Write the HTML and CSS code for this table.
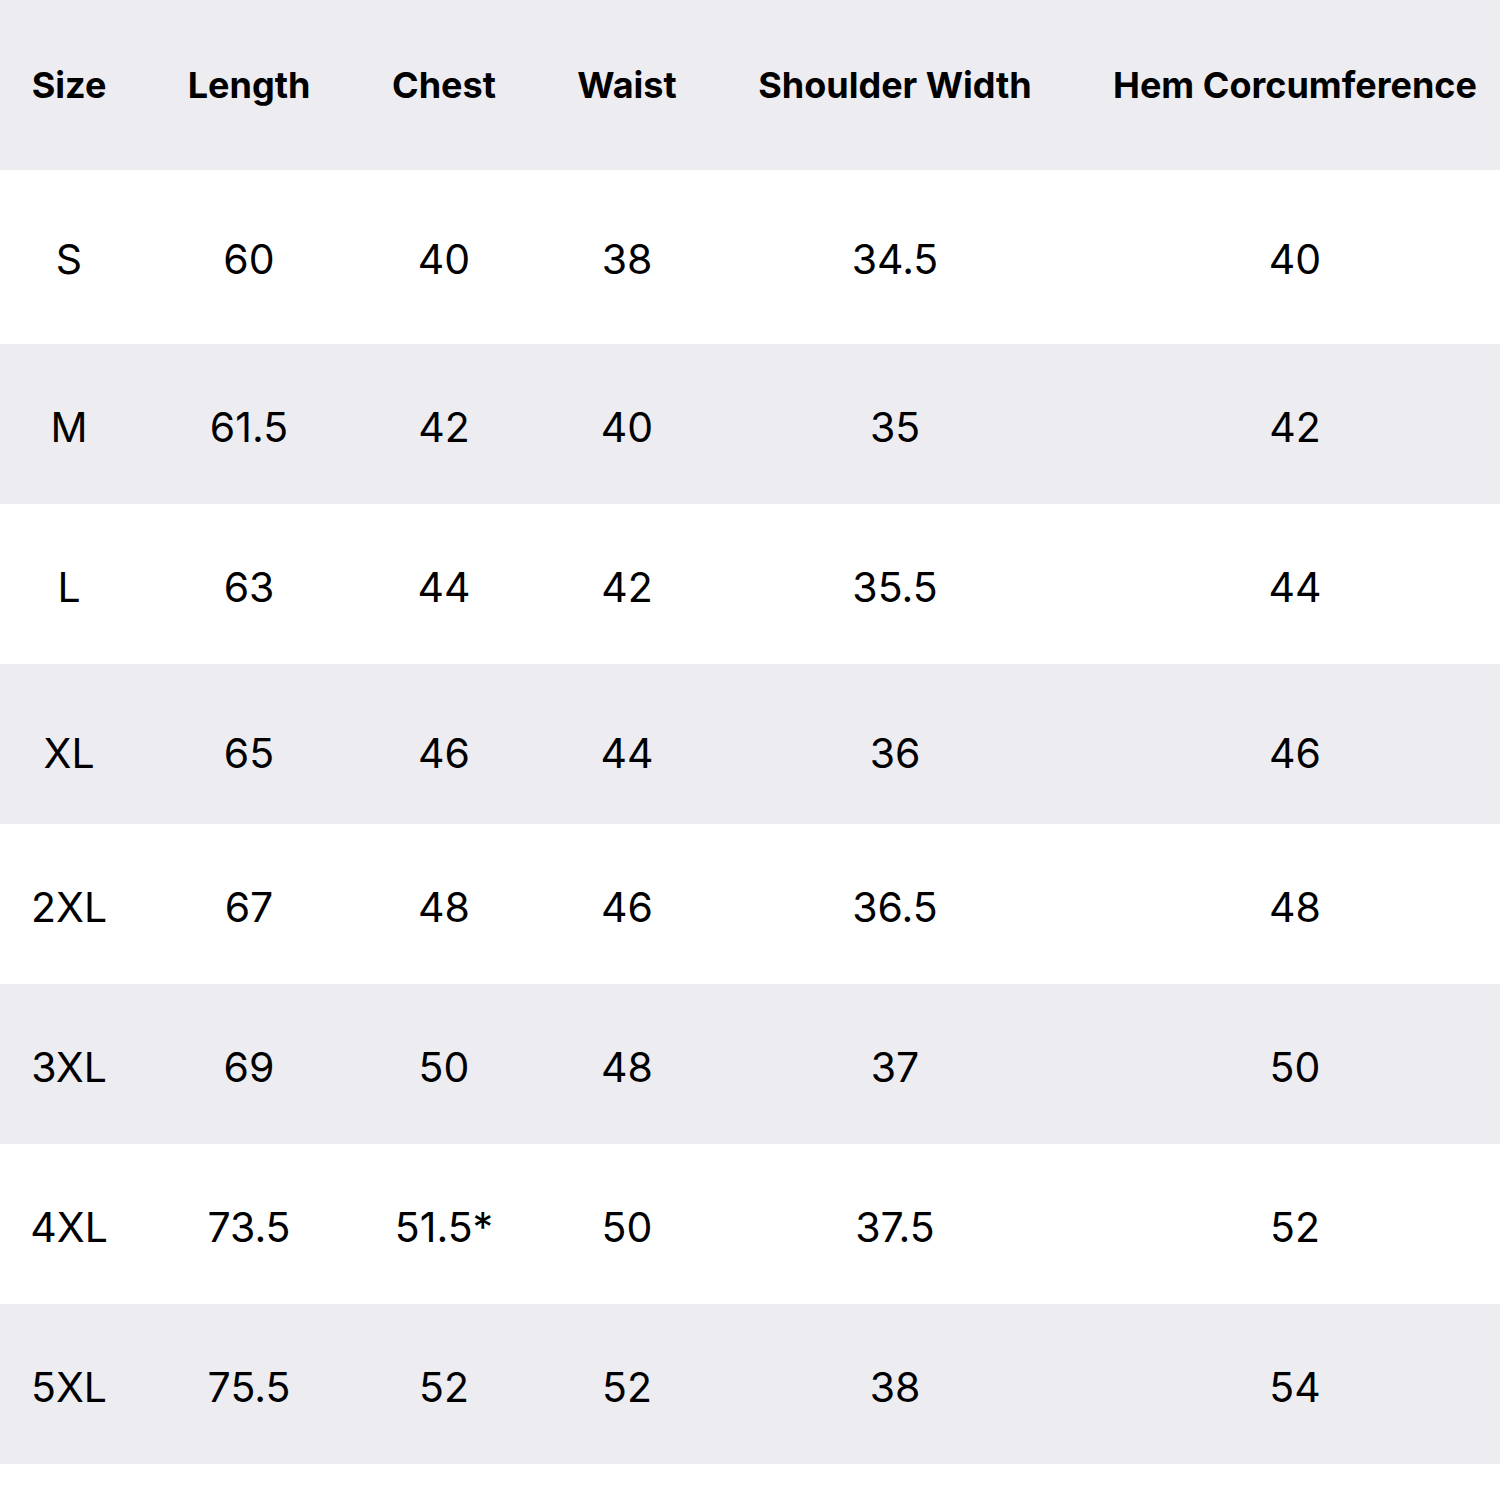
FILE: index.html
```html
<!DOCTYPE html>
<html lang="en">
<head>
<meta charset="utf-8">
<title>Size Chart</title>
<link rel="stylesheet" href="styles.css">
</head>
<body>
<div class="chart">
  <div class="row head">
    <div class="cell">Size</div>
    <div class="cell">Length</div>
    <div class="cell">Chest</div>
    <div class="cell">Waist</div>
    <div class="cell">Shoulder Width</div>
    <div class="cell last">Hem Corcumference</div>
  </div>
  <div class="row first">
    <div class="cell">S</div><div class="cell">60</div><div class="cell">40</div><div class="cell">38</div><div class="cell">34.5</div><div class="cell last">40</div>
  </div>
  <div class="row shade">
    <div class="cell">M</div><div class="cell">61.5</div><div class="cell">42</div><div class="cell">40</div><div class="cell">35</div><div class="cell last">42</div>
  </div>
  <div class="row">
    <div class="cell">L</div><div class="cell">63</div><div class="cell">44</div><div class="cell">42</div><div class="cell">35.5</div><div class="cell last">44</div>
  </div>
  <div class="row shade low">
    <div class="cell">XL</div><div class="cell">65</div><div class="cell">46</div><div class="cell">44</div><div class="cell">36</div><div class="cell last">46</div>
  </div>
  <div class="row">
    <div class="cell">2XL</div><div class="cell">67</div><div class="cell">48</div><div class="cell">46</div><div class="cell">36.5</div><div class="cell last">48</div>
  </div>
  <div class="row shade">
    <div class="cell">3XL</div><div class="cell">69</div><div class="cell">50</div><div class="cell">48</div><div class="cell">37</div><div class="cell last">50</div>
  </div>
  <div class="row">
    <div class="cell">4XL</div><div class="cell">73.5</div><div class="cell">51.5*</div><div class="cell">50</div><div class="cell">37.5</div><div class="cell last">52</div>
  </div>
  <div class="row shade">
    <div class="cell">5XL</div><div class="cell">75.5</div><div class="cell">52</div><div class="cell">52</div><div class="cell">38</div><div class="cell last">54</div>
  </div>
</div>
</body>
</html>
```

FILE: styles.css
```css
html, body {
  margin: 0;
  padding: 0;
  background: #ffffff;
}
body {
  width: 1500px;
  height: 1500px;
  overflow: hidden;
  font-family: Inter, "Liberation Sans", sans-serif;
  color: #000000;
}
.chart {
  display: flex;
  flex-direction: column;
}
.row {
  display: grid;
  grid-template-columns: 138px 222px 168px 198px 338px 436px;
  height: 160px;
  box-sizing: border-box;
  padding-top: 6px;
  font-size: 41px;
  font-weight: 400;
  background: #ffffff;
}
.row.head {
  height: 170px;
  padding-top: 0;
  font-size: 36px;
  font-weight: 700;
  background: #edecf1;
}
.row.first {
  height: 174px;
  padding-top: 4px;
}
.row.shade {
  background: #edecf1;
}
.row.low {
  padding-top: 17px;
}
.cell {
  display: flex;
  align-items: center;
  justify-content: center;
  white-space: nowrap;
}
.cell.last {
  padding-left: 26px;
}
```
